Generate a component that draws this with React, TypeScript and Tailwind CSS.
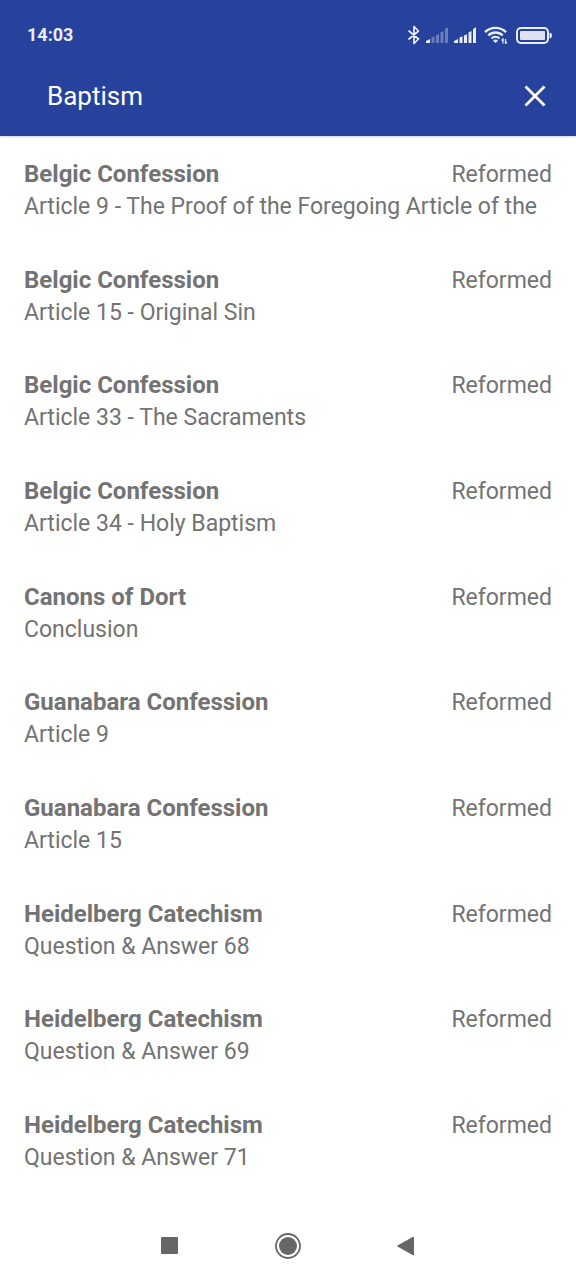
const results = [
  { id: 1, title: 'Belgic Confession', section: 'Article 9 - The Proof of the Foregoing Article of the', tradition: 'Reformed' },
  { id: 2, title: 'Belgic Confession', section: 'Article 15 - Original Sin', tradition: 'Reformed' },
  { id: 3, title: 'Belgic Confession', section: 'Article 33 - The Sacraments', tradition: 'Reformed' },
  { id: 4, title: 'Belgic Confession', section: 'Article 34 - Holy Baptism', tradition: 'Reformed' },
  { id: 5, title: 'Canons of Dort', section: 'Conclusion', tradition: 'Reformed' },
  { id: 6, title: 'Guanabara Confession', section: 'Article 9', tradition: 'Reformed' },
  { id: 7, title: 'Guanabara Confession', section: 'Article 15', tradition: 'Reformed' },
  { id: 8, title: 'Heidelberg Catechism', section: 'Question & Answer 68', tradition: 'Reformed' },
  { id: 9, title: 'Heidelberg Catechism', section: 'Question & Answer 69', tradition: 'Reformed' },
  { id: 10, title: 'Heidelberg Catechism', section: 'Question & Answer 71', tradition: 'Reformed' },
]

function Signal({ bars }: { bars: number }) {
  return (
    <svg width="22" height="16" viewBox="0 0 22 16" fill="#e8eeff">
      <path d="M0 16v-2l4-2v4z" />
      <path d="M5.500 16v-5.500l3-1.300V16z" opacity={bars > 1 ? 1 : 0.35} />
      <path d="M10 16V8.500l3-1.300V16z" opacity={bars > 1 ? 1 : 0.35} />
      <path d="M14.500 16V5.500l3-1.500V16z" opacity={bars > 1 ? 1 : 0.35} />
      <path d="M19 16V2l3-1.700V16z" opacity={bars > 1 ? 1 : 0.35} />
    </svg>
  )
}

function StatusBar() {
  return (
    <div className="flex h-14 items-center justify-between pt-3.5 pr-6 pl-[27px]">
      <span className="text-lg font-bold text-[#e8eeff]">14:03</span>
      <div className="flex items-center gap-2">
        <div className="flex items-center gap-1.5">
          <svg width="12" height="20" viewBox="0 0 12 20" fill="none" stroke="#e8eeff" strokeWidth="1.700" strokeLinejoin="round" strokeLinecap="round">
            <path d="M1 6l9.500 8L6 18.500v-17L10.500 6 1 14" />
          </svg>
          <Signal bars={1} />
          <Signal bars={5} />
        </div>
        <svg width="24" height="18" viewBox="0 0 24 18" fill="none" stroke="#e8eeff" strokeWidth="2.400">
          <path d="M1 6.200a15 15 0 0 1 21 0" />
          <path d="M4.300 9.500a10.300 10.300 0 0 1 14.400 0" />
          <path d="M7.600 12.500a5.600 5.600 0 0 1 7.800 0" />
          <path d="M9 14.700a3.600 3.600 0 0 1 5 0L11.500 17z" fill="#e8eeff" stroke="none" />
          <path d="M19 17.500V13l-1.500 1.500M21.500 13v4.500L23 16" strokeWidth="1.200" />
        </svg>
        <svg width="36" height="17" viewBox="0 0 36 17" fill="none">
          <rect x="1" y="1" width="31" height="15" rx="4" stroke="#e8eeff" strokeWidth="2" />
          <rect x="4" y="4" width="25" height="9" rx="1" fill="#e0e1f5" />
          <path d="M34 6c2 0 2 5 0 5z" fill="#e8eeff" stroke="#e8eeff" />
        </svg>
      </div>
    </div>
  )
}

function App() {
  return (
    <div className="flex min-h-screen flex-col bg-white font-[Roboto,sans-serif]">
      <header className="bg-[#27429c] shadow-[0_1px_2px_#27429c40]">
        <StatusBar />
        <div className="flex h-20 items-center justify-between pr-6 pl-[47px]">
          <input
            type="text"
            aria-label="Search"
            defaultValue="Baptism"
            className="min-w-0 flex-1 bg-transparent text-[26px] leading-8 text-white outline-none"
          />
          <button aria-label="Clear search" className="p-1.5">
            <svg width="22" height="22" viewBox="0 0 22 22" stroke="#fff" strokeWidth="2.800">
              <path d="M1.500 1.500l19 19M20.500 1.500l-19 19" />
            </svg>
          </button>
        </div>
      </header>

      <ul className="flex flex-1 flex-col justify-between gap-8 px-6 pt-[22px] pb-[37px] text-[23px] leading-8 text-[#737373]">
        {results.map((result) => (
          <li key={result.id}>
            <div className="flex items-baseline justify-between gap-4">
              <h2 className="text-2xl leading-8 font-bold">{result.title}</h2>
              <span>{result.tradition}</span>
            </div>
            <p className="truncate">{result.section}</p>
          </li>
        ))}
      </ul>

      <nav className="flex h-[69px] items-center justify-center gap-24">
        <button aria-label="Recent apps">
          <svg width="18" height="18" viewBox="0 0 18 18" fill="#666">
            <rect width="17" height="17" rx="1" />
          </svg>
        </button>
        <button aria-label="Home">
          <svg width="26" height="26" viewBox="0 0 26 26" fill="#666">
            <circle cx="13" cy="13" r="9" />
            <circle cx="13" cy="13" r="12" fill="none" stroke="#666" strokeWidth="1.800" />
          </svg>
        </button>
        <button aria-label="Back">
          <svg width="18" height="20" viewBox="0 0 18 20" fill="#666" stroke="#666" strokeWidth="1" strokeLinejoin="round">
            <path d="M0.500 10l16-9v18z" />
          </svg>
        </button>
      </nav>
    </div>
  )
}

export default App
